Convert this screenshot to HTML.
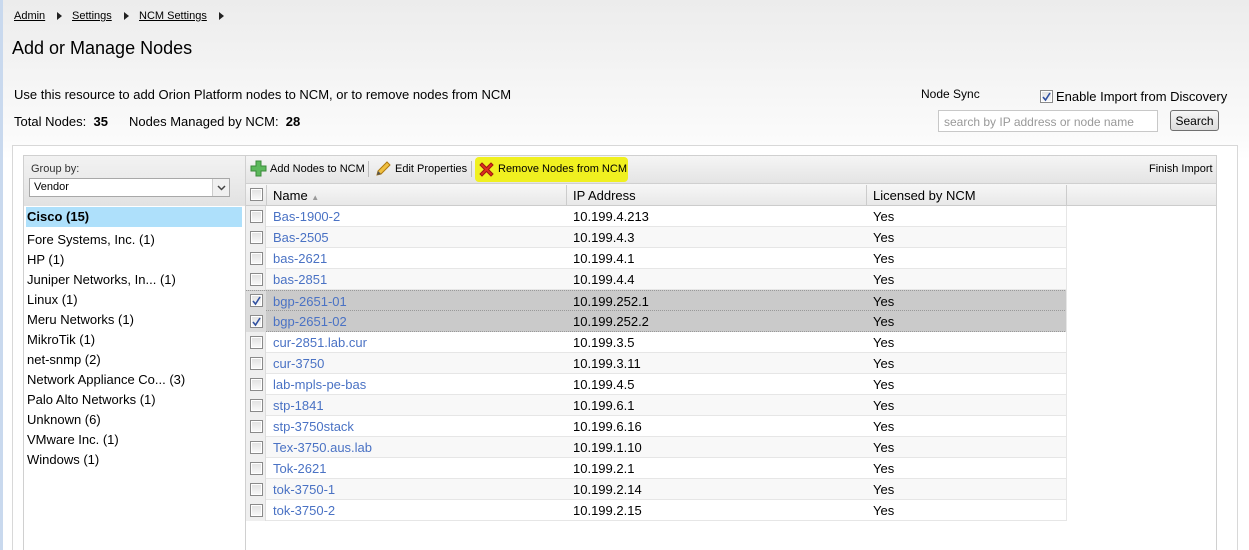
<!DOCTYPE html>
<html><head><meta charset="utf-8"><style>
*{margin:0;padding:0;box-sizing:border-box}
html,body{width:1249px;height:550px;overflow:hidden}
body{position:relative;font-family:"Liberation Sans",Arial,sans-serif;font-size:13px;color:#000;background:linear-gradient(#ececec 0,#fbfbfb 140px,#fff 160px)}
.a{position:absolute}
.bc{font-size:11px;top:10px}
.bc span{text-decoration:underline}
.tri{display:inline-block;width:0;height:0;border-left:5px solid #222;border-top:4px solid transparent;border-bottom:4px solid transparent;margin:0 0 0 12px;vertical-align:middle}
.cb{position:absolute;width:13px;height:13px;border:1px solid #8a8a8a;background:linear-gradient(#e0e0e0,#fafafa);box-shadow:inset 0 0 0 1px #fff}
.row{position:absolute;left:246px;width:821px;height:21px;border-bottom:1px solid #e6e6e6}
.row .n{position:absolute;left:27px;top:3px;color:#4a72c4}
.row .ip{position:absolute;left:327px;top:3px}
.row .l{position:absolute;left:627px;top:3px}
.row .cbc{position:absolute;left:0;top:0;width:20px;height:21px;background:#efefef;border-right:1px solid #ddd}
.grp{position:absolute;left:27px}
</style></head><body>
<div class="a" style="left:0;top:0;width:3px;height:550px;background:#c9d9ee"></div>
<div class="a bc" style="left:14px"><span>Admin</span><i class="tri"></i></div>
<div class="a bc" style="left:72px"><span>Settings</span><i class="tri"></i></div>
<div class="a bc" style="left:139px"><span>NCM Settings</span><i class="tri"></i></div>
<div class="a" style="left:12px;top:38px;font-size:18px">Add or Manage Nodes</div>
<div class="a" style="left:14px;top:87px">Use this resource to add Orion Platform nodes to NCM, or to remove nodes from NCM</div>
<div class="a" style="left:14px;top:114px">Total Nodes:&nbsp; <b>35</b></div>
<div class="a" style="left:129px;top:114px">Nodes Managed by NCM:&nbsp; <b>28</b></div>
<div class="a" style="left:921px;top:87px;font-size:12px">Node Sync</div>
<div class="cb" style="left:1040px;top:90px"><svg width="11" height="11" style="position:absolute;left:0;top:0"><path d="M2 6l2.5 3L9 2" stroke="#3050a0" stroke-width="1.6" fill="none"/></svg></div>
<div class="a" style="left:1056px;top:89px;font-size:13px">Enable Import from Discovery</div>
<div class="a" style="left:938px;top:110px;width:220px;height:22px;border:1px solid #c8c8c8;background:#fff;color:#999;font-size:12px;padding:4px 5px">search by IP address or node name</div>
<div class="a" style="left:1170px;top:110px;width:49px;height:21px;border:1px solid #707070;border-radius:3px;background:linear-gradient(#f6f6f6,#dcdcdc);font-size:12px;text-align:center;padding-top:3px">Search</div>
<div class="a" style="left:12px;top:145px;width:1226px;height:405px;border:1px solid #d8d8d8;border-bottom:none;background:#fff"></div>
<div class="a" style="left:23px;top:155px;width:223px;height:395px;border:1px solid #d0d0d0;border-bottom:none;background:#fff"></div>
<div class="a" style="left:24px;top:156px;width:221px;height:50px;background:linear-gradient(#f2f2f2,#e2e2e2)"></div>
<div class="a" style="left:31px;top:163px;font-size:11px;color:#333">Group by:</div>
<div class="a" style="left:29px;top:178px;width:201px;height:19px;border:1px solid #a8a8a8;background:#fff;font-size:11px;padding:2px 4px">Vendor</div>
<div class="a" style="left:212px;top:179px;width:17px;height:17px;border-left:1px solid #ccc;background:#f0f0f0"><svg width="17" height="17"><path d="M5 7l3.5 3.5L12 7" stroke="#444" stroke-width="1.5" fill="none"/></svg></div>
<div class="a" style="left:26px;top:207px;width:216px;height:20px;background:#aee0fb"></div>
<div class="grp" style="top:209px;font-weight:bold">Cisco (15)</div>
<div class="grp" style="top:232px">Fore Systems, Inc. (1)</div>
<div class="grp" style="top:252px">HP (1)</div>
<div class="grp" style="top:272px">Juniper Networks, In... (1)</div>
<div class="grp" style="top:292px">Linux (1)</div>
<div class="grp" style="top:312px">Meru Networks (1)</div>
<div class="grp" style="top:332px">MikroTik (1)</div>
<div class="grp" style="top:352px">net-snmp (2)</div>
<div class="grp" style="top:372px">Network Appliance Co... (3)</div>
<div class="grp" style="top:392px">Palo Alto Networks (1)</div>
<div class="grp" style="top:412px">Unknown (6)</div>
<div class="grp" style="top:432px">VMware Inc. (1)</div>
<div class="grp" style="top:452px">Windows (1)</div>
<div class="a" style="left:245px;top:155px;width:972px;height:395px;border:1px solid #d0d0d0;border-bottom:none;background:#fff"></div>
<div class="a" style="left:246px;top:156px;width:970px;height:28px;background:linear-gradient(#f5f5f5,#e4e4e4);border-bottom:1px solid #d0d0d0"></div>
<svg class="a" style="left:250px;top:160px" width="17" height="17"><path d="M6 1h5v5h5v5h-5v5H6v-5H1V6h5z" fill="#5cb85c" stroke="#3a8a3a"/></svg>
<div class="a" style="left:270px;top:163px;font-size:11px">Add Nodes to NCM</div>
<div class="a" style="left:368px;top:161px;width:1px;height:16px;background:#bbb"></div>
<svg class="a" style="left:375px;top:160px" width="17" height="17"><path d="M2 15l1-4L12 2l3 3-9 9z" fill="#f0c040" stroke="#b07a10"/><path d="M2 15l1-4 3 3z" fill="#555"/></svg>
<div class="a" style="left:395px;top:163px;font-size:11px">Edit Properties</div>
<div class="a" style="left:471px;top:161px;width:1px;height:16px;background:#bbb"></div>
<div class="a" style="left:475px;top:157px;width:153px;height:25px;background:#f0f020;border-radius:4px"></div>
<svg class="a" style="left:478px;top:161px" width="17" height="17"><path d="M2 4l2-2 4.5 4.5L13 2l2 2-4.5 4.5L15 13l-2 2-4.5-4.5L4 15l-2-2 4.5-4.5z" fill="#e03020" stroke="#a01810"/></svg>
<div class="a" style="left:498px;top:163px;font-size:11px">Remove Nodes from NCM</div>
<div class="a" style="left:1149px;top:163px;font-size:11px">Finish Import</div>
<div class="a" style="left:246px;top:184px;width:970px;height:22px;background:linear-gradient(#f7f7f7,#e8e8e8);border-bottom:1px solid #ccc"></div>
<div class="a" style="left:266px;top:185px;width:1px;height:20px;background:#ccc"></div>
<div class="a" style="left:566px;top:185px;width:1px;height:20px;background:#ccc"></div>
<div class="a" style="left:866px;top:185px;width:1px;height:20px;background:#ccc"></div>
<div class="a" style="left:1066px;top:185px;width:1px;height:20px;background:#ccc"></div>
<div class="cb" style="left:250px;top:188px"></div>
<div class="a" style="left:273px;top:188px">Name <span style="font-size:8px;color:#999">▲</span></div>
<div class="a" style="left:573px;top:188px">IP Address</div>
<div class="a" style="left:873px;top:188px">Licensed by NCM</div>
<div class="row" style="top:206px"><div class="cbc"></div><div class="cb" style="left:4px;top:4px"></div><div class="n">Bas-1900-2</div><div class="ip">10.199.4.213</div><div class="l">Yes</div></div>
<div class="row" style="top:227px;background:#f8f8f8"><div class="cbc"></div><div class="cb" style="left:4px;top:4px"></div><div class="n">Bas-2505</div><div class="ip">10.199.4.3</div><div class="l">Yes</div></div>
<div class="row" style="top:248px"><div class="cbc"></div><div class="cb" style="left:4px;top:4px"></div><div class="n">bas-2621</div><div class="ip">10.199.4.1</div><div class="l">Yes</div></div>
<div class="row" style="top:269px;background:#f8f8f8"><div class="cbc"></div><div class="cb" style="left:4px;top:4px"></div><div class="n">bas-2851</div><div class="ip">10.199.4.4</div><div class="l">Yes</div></div>
<div class="row" style="top:290px;background:#cacaca;border-top:1px dotted #999;border-bottom:1px dotted #999"><div class="cbc" style="background:#dcdcdc"></div><div class="cb" style="left:4px;top:3px"><svg width="11" height="11" style="position:absolute;left:0;top:0"><path d="M2 6l2.5 3L9 2" stroke="#3050a0" stroke-width="1.6" fill="none"/></svg></div><div class="n">bgp-2651-01</div><div class="ip">10.199.252.1</div><div class="l">Yes</div></div>
<div class="row" style="top:311px;background:#cacaca;border-bottom:1px dotted #999"><div class="cbc" style="background:#dcdcdc"></div><div class="cb" style="left:4px;top:4px"><svg width="11" height="11" style="position:absolute;left:0;top:0"><path d="M2 6l2.5 3L9 2" stroke="#3050a0" stroke-width="1.6" fill="none"/></svg></div><div class="n">bgp-2651-02</div><div class="ip">10.199.252.2</div><div class="l">Yes</div></div>
<div class="row" style="top:332px"><div class="cbc"></div><div class="cb" style="left:4px;top:4px"></div><div class="n">cur-2851.lab.cur</div><div class="ip">10.199.3.5</div><div class="l">Yes</div></div>
<div class="row" style="top:353px;background:#f8f8f8"><div class="cbc"></div><div class="cb" style="left:4px;top:4px"></div><div class="n">cur-3750</div><div class="ip">10.199.3.11</div><div class="l">Yes</div></div>
<div class="row" style="top:374px"><div class="cbc"></div><div class="cb" style="left:4px;top:4px"></div><div class="n">lab-mpls-pe-bas</div><div class="ip">10.199.4.5</div><div class="l">Yes</div></div>
<div class="row" style="top:395px;background:#f8f8f8"><div class="cbc"></div><div class="cb" style="left:4px;top:4px"></div><div class="n">stp-1841</div><div class="ip">10.199.6.1</div><div class="l">Yes</div></div>
<div class="row" style="top:416px"><div class="cbc"></div><div class="cb" style="left:4px;top:4px"></div><div class="n">stp-3750stack</div><div class="ip">10.199.6.16</div><div class="l">Yes</div></div>
<div class="row" style="top:437px;background:#f8f8f8"><div class="cbc"></div><div class="cb" style="left:4px;top:4px"></div><div class="n">Tex-3750.aus.lab</div><div class="ip">10.199.1.10</div><div class="l">Yes</div></div>
<div class="row" style="top:458px"><div class="cbc"></div><div class="cb" style="left:4px;top:4px"></div><div class="n">Tok-2621</div><div class="ip">10.199.2.1</div><div class="l">Yes</div></div>
<div class="row" style="top:479px;background:#f8f8f8"><div class="cbc"></div><div class="cb" style="left:4px;top:4px"></div><div class="n">tok-3750-1</div><div class="ip">10.199.2.14</div><div class="l">Yes</div></div>
<div class="row" style="top:500px"><div class="cbc"></div><div class="cb" style="left:4px;top:4px"></div><div class="n">tok-3750-2</div><div class="ip">10.199.2.15</div><div class="l">Yes</div></div>
<div class="a" style="left:1066px;top:206px;width:1px;height:315px;background:#e6e6e6"></div>
</body></html>
